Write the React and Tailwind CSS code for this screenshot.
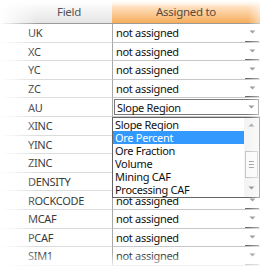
import React from "react";

const fields = ["UK", "XC", "YC", "ZC", "AU", "XINC", "YINC", "ZINC", "DENSITY", "ROCKCODE", "MCAF", "PCAF", "SIM1"];
const covered = ["XINC", "YINC", "ZINC", "DENSITY"];
const options = ["Slope Region", "Ore Percent", "Ore Fraction", "Volume", "Mining CAF", "Processing CAF"];

function Arrow({ className = "" }) {
  return (
    <svg width="7" height="4" viewBox="0 0 7 4" className={className}>
      <polygon points="0.5,0.5 6.5,0.5 3.5,3.5" fill="#8a8a8a" />
    </svg>
  );
}

export default function App() {
  return (
    <div className="relative w-[280px] h-[270px] overflow-hidden bg-white text-[11px] tracking-[-0.3px] leading-none font-['Noto_Sans',sans-serif]">
      <div className="flex h-[24px] w-[260px] text-[11.5px]">
        <div className="w-[112px] pl-[26px] flex items-center justify-center bg-gradient-to-b from-white to-[#e6e6e6] border-b border-[#9a9a9a] text-[#555]">
          Field
        </div>
        <div className="w-[148px] flex items-center justify-center bg-gradient-to-b from-[#fff4e6] to-[#f6ad58] border-b border-[#9a9a9a] text-[#5a4a3a]">
          Assigned to
        </div>
      </div>
      {fields.map((f) => (
        <div key={f} className="flex h-[18.6px] w-[260px]">
          <div className="w-[112px] pl-[28px] flex items-center border-b border-[#dcdcdc] text-[#3a3a3a]">{f}</div>
          <div className="w-[148px] flex border-l border-[#a8a8a8] border-b border-b-[#c8c8c8]">
            {f === "AU" ? (
              <div className="flex-1 flex items-center border border-[#7a7a7a] m-[1px] pl-[2px] text-[#111]">
                <span className="flex-1">Slope Region</span>
                <div className="w-[14px] h-full flex items-center justify-center">
                  <Arrow />
                </div>
              </div>
            ) : (
              <div className="flex-1 flex items-center pl-[3px] text-[#111]">
                <span className={"flex-1 " + (covered.includes(f) ? "invisible" : "")}>not assigned</span>
                <div className="w-[14px] h-full flex items-center justify-center border-b border-[#6a6a6a] mr-[1px]">
                  <Arrow />
                </div>
              </div>
            )}
          </div>
        </div>
      ))}

      <div className="absolute left-[112px] top-[117px] w-[148px] h-[81px] bg-white border border-[#646464] flex">
        <div className="flex-1 flex flex-col">
          {options.map((o, i) => (
            <div
              key={o}
              className={
                "h-[13px] flex items-center pl-[2px] " +
                (i === 1 ? "bg-[#3399ff] text-white" : "text-[#111]")
              }
            >
              {o}
            </div>
          ))}
        </div>
        <div className="w-[15px] bg-[#f4f4f4] flex flex-col items-center">
          <div className="h-[14px] flex items-center justify-center">
            <svg width="7" height="4" viewBox="0 0 7 4">
              <polygon points="0.5,3.5 6.5,3.5 3.5,0.5" fill="#a0a0a0" />
            </svg>
          </div>
          <div className="mt-[19px] w-[13px] h-[27px] border border-[#c4c4c4] bg-[#fafafa] flex flex-col items-center justify-center gap-[2px]">
            <div className="w-[5px] h-px bg-[#9a9a9a]" />
            <div className="w-[5px] h-px bg-[#9a9a9a]" />
            <div className="w-[5px] h-px bg-[#9a9a9a]" />
          </div>
          <div className="flex-1 flex items-center justify-center">
            <Arrow />
          </div>
        </div>
      </div>

      <div className="absolute left-0 top-0 h-full w-[38px] bg-gradient-to-r from-white to-transparent" />
      <div className="absolute left-[248px] top-0 h-full w-[24px] bg-gradient-to-r from-transparent to-white" />
      <div className="absolute left-[272px] top-0 h-full w-[8px] bg-white" />
      <div className="absolute left-0 top-0 w-full h-[7px] bg-gradient-to-b from-white to-transparent" />
      <div className="absolute left-0 top-[252px] w-full h-[18px] bg-gradient-to-b from-transparent to-white" />
    </div>
  );
}
